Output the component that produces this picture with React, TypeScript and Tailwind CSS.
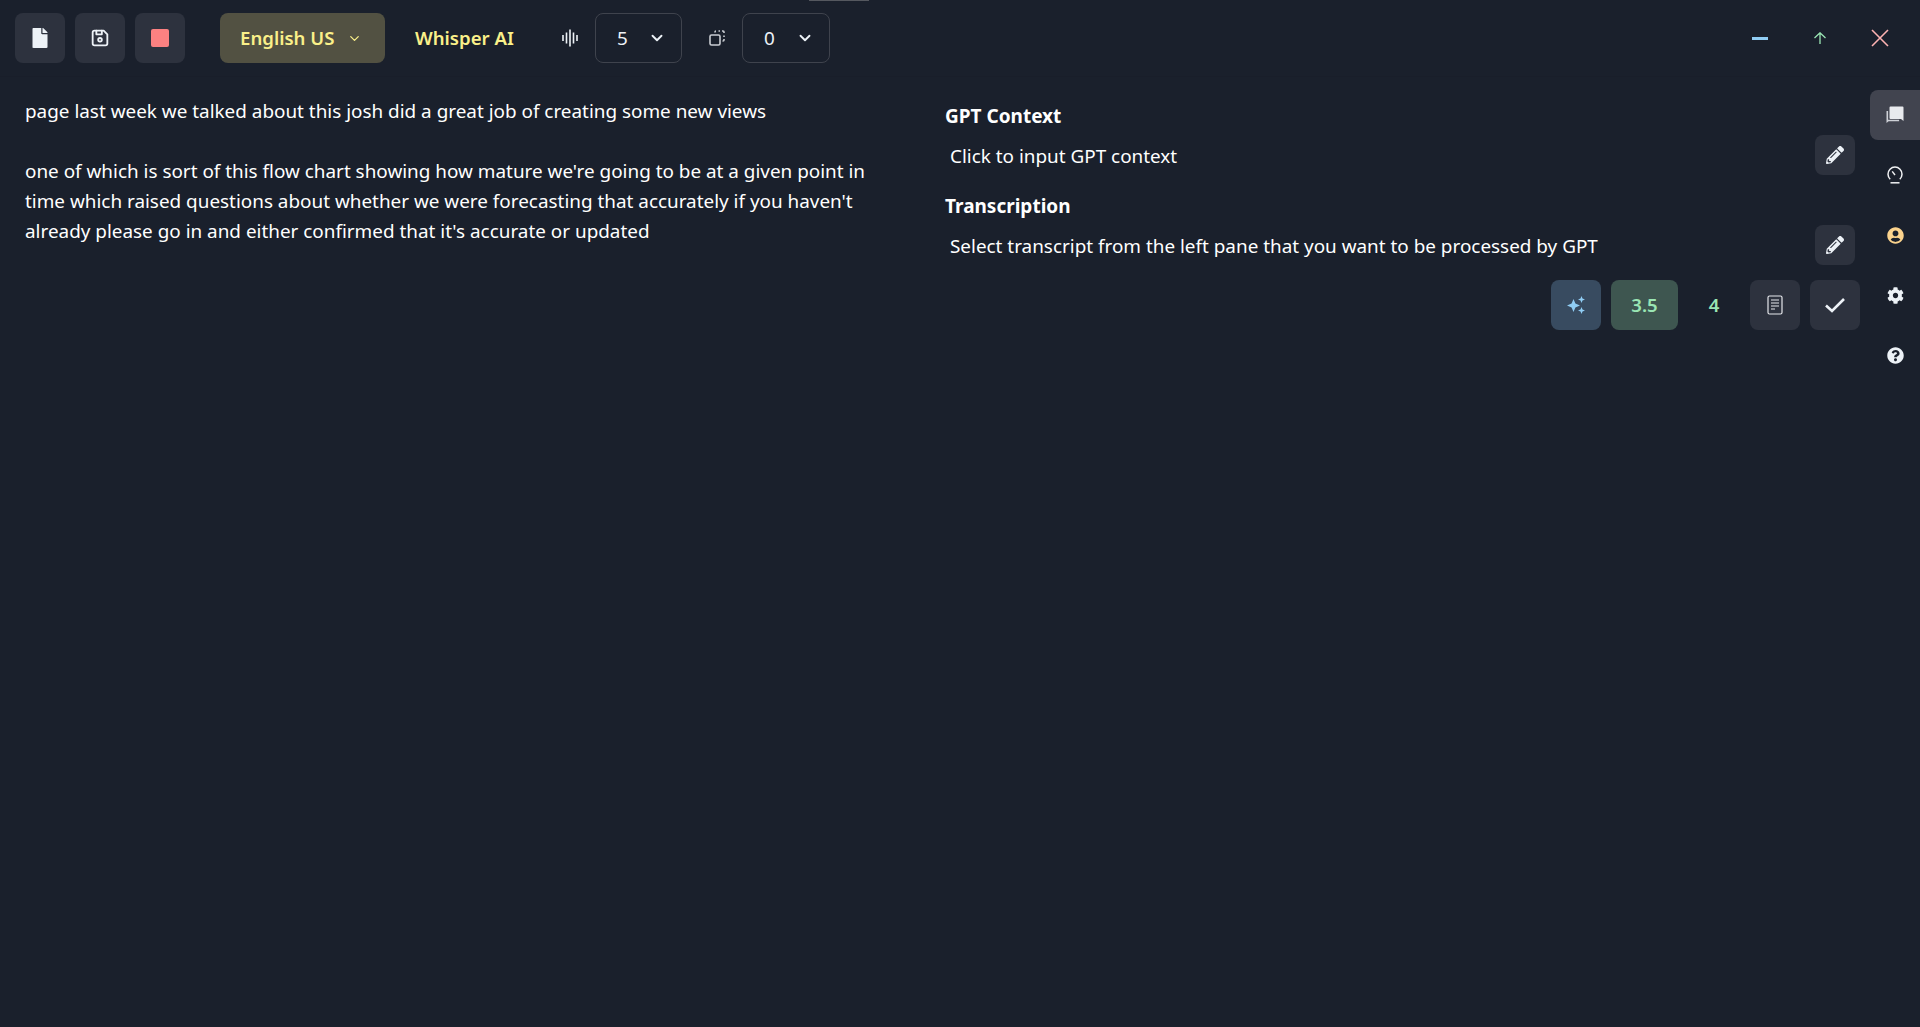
import { FaFile, FaPencilAlt, FaUserCircle, FaCog, FaQuestionCircle } from "react-icons/fa";
import { TbDeviceFloppy } from "react-icons/tb";
import { FiChevronDown } from "react-icons/fi";

function WaveIcon() {
  return (
    <svg width="16" height="18" viewBox="0 0 16 18" stroke="#edf2f7" fill="none" strokeWidth="1.6">
      <path d="M1 6v6M4.5 3.5v11M8 .5v17M11.5 3.5v11M15 6v6" />
    </svg>
  );
}

function StackIcon() {
  return (
    <svg width="16" height="16" viewBox="0 0 16 16" fill="none" stroke="#c9ccd2" strokeWidth="1.6">
      <rect x="1" y="5" width="10" height="10" rx="1.5" />
      <path d="M6 2.5V2a1 1 0 0 1 1-1M9.5 1h1.5M13 1h1a1 1 0 0 1 1 1v1M15 5.5V7M15 9v1a1 1 0 0 1-1 1h-.5" />
    </svg>
  );
}

function ChatIcon() {
  return (
    <svg width="18" height="18" viewBox="0 0 18 18" fill="#e8eaee">
      <path d="M3.5 1.5a1 1 0 0 1 1-1h12a1 1 0 0 1 1 1V15l-2.5-2H4.5a1 1 0 0 1-1-1z" />
      <path d="M.5 5h1.6v8.8h11V15.2H2.6L.5 17z" opacity="0.85" />
    </svg>
  );
}

function GaugeIcon() {
  return (
    <svg width="18" height="18" viewBox="0 0 18 18" fill="none" stroke="#f1f2f4" strokeWidth="1.5">
      <path d="M4.2 13.2a7 7 0 1 1 9.6 0" />
      <path d="M4.5 16.8h9" />
      <path d="M9 9 6.2 5.4" />
    </svg>
  );
}

function SparkIcon() {
  return (
    <svg width="18" height="18" viewBox="0 0 18 18" fill="#90cdf4">
      <path d="M6.5 3 8.4 7.6 13 9.5 8.4 11.4 6.5 16 4.6 11.4 0 9.5 4.6 7.6z" />
      <path d="M14.5 0 15.5 2.5 18 3.5 15.5 4.5 14.5 7 13.5 4.5 11 3.5 13.5 2.5z" />
      <path d="M14.5 11 15.5 13.5 18 14.5 15.5 15.5 14.5 18 13.5 15.5 11 14.5 13.5 13.5z" />
    </svg>
  );
}

function DocIcon() {
  return (
    <svg width="16" height="20" viewBox="0 0 16 20" fill="none" stroke="#e5e7eb" strokeWidth="1.2">
      <rect x="1" y="1" width="14" height="18" rx="1.5" />
      <path d="M4 5h8M4 8h8M4 11h8M4 14h4" />
    </svg>
  );
}

export default function App() {
  return (
    <div className="relative h-screen w-full bg-[#1a202c] text-white font-['Noto_Sans',sans-serif] text-[18.9px] leading-[30px] overflow-hidden flex flex-col">
      <div className="absolute left-[809px] top-0 h-px w-[60px] bg-[#55585f]" />
      {/* toolbar */}
      <header className="flex h-[76px] shrink-0 items-center pl-[15px] pr-[31px] shadow-[0_1px_0_#191e2a]">
        <div className="flex gap-[10px]">
          <button className="flex h-[50px] w-[50px] items-center justify-center rounded-lg bg-[#2d323e] text-[#edf2f7]">
            <FaFile size={20} />
          </button>
          <button className="flex h-[50px] w-[50px] items-center justify-center rounded-lg bg-[#2d323e] text-[#edf2f7]">
            <TbDeviceFloppy size={22} />
          </button>
          <button className="flex h-[50px] w-[50px] items-center justify-center rounded-lg bg-[#2d323e]">
            <span className="h-[18px] w-[18px] rounded-[2px] bg-[#fc8181]" />
          </button>
        </div>
        <button className="ml-[35px] flex h-[50px] w-[165px] items-center justify-between rounded-lg bg-[#525142] pl-[20px] pr-[23px] text-[18.6px] font-semibold text-[#faf089]">
          English US
          <FiChevronDown size={15} />
        </button>
        <span className="ml-[30px] w-[99px] whitespace-nowrap text-[18.6px] font-semibold text-[#faf089]">Whisper AI</span>
        <span className="ml-[48px] flex"><WaveIcon /></span>
        <button className="ml-[17px] flex h-[50px] w-[87px] items-center justify-between rounded-lg border border-[#3f434d] pl-[21px] pr-[15px] text-[#edf2f7]">
          5
          <FiChevronDown size={18} strokeWidth={2.5} />
        </button>
        <span className="ml-[27px] flex"><StackIcon /></span>
        <button className="ml-[17px] flex h-[50px] w-[88px] items-center justify-between rounded-lg border border-[#3f434d] pl-[21px] pr-[15px] text-[#edf2f7]">
          0
          <FiChevronDown size={18} strokeWidth={2.5} />
        </button>
        <div className="ml-auto flex items-center">
          <span className="block h-[3px] w-4 bg-[#90cdf4]" />
          <svg className="ml-[46px]" width="12" height="12" viewBox="0 0 12 12" fill="none" stroke="#9ae6b4" strokeWidth="1.3">
            <path d="M6 12V1M.5 6 6 .8 11.5 6" />
          </svg>
          <svg className="ml-[45px]" width="18" height="18" viewBox="0 0 18 18" fill="none" stroke="#feb2b2" strokeWidth="1.6">
            <path d="M1 1l16 16M17 1 1 17" />
          </svg>
        </div>
      </header>

      <div className="flex flex-1">
        {/* transcript */}
        <div className="w-[925px] shrink-0 pl-[25px] pr-[35px] pt-5">
          <p>page last week we talked about this josh did a great job of creating some new views</p>
          <p className="mt-[30px]">
            one of which is sort of this flow chart showing how mature we're going to be at a given point in time which raised questions about whether we were forecasting that accurately if you haven't already please go in and either confirmed that it's accurate or updated
          </p>
        </div>

        {/* gpt pane */}
        <div className="flex-1 pl-5 pr-[10px] pt-[25px]">
          <h2 className="text-[19px] font-bold">GPT Context</h2>
          <div className="mt-[4px] flex h-10 items-center justify-between pl-[5px] pr-[5px]">
            <span className="mt-[2px]">Click to input GPT context</span>
            <button className="flex h-10 w-10 items-center justify-center rounded-lg bg-[#2d323e] text-[#edf2f7]">
              <FaPencilAlt size={18} />
            </button>
          </div>
          <h2 className="mt-[16px] text-[19px] font-bold">Transcription</h2>
          <div className="mt-[4px] flex h-10 items-center justify-between pl-[5px] pr-[5px]">
            <span className="mt-[2px]">Select transcript from the left pane that you want to be processed by GPT</span>
            <button className="flex h-10 w-10 items-center justify-center rounded-lg bg-[#2d323e] text-[#edf2f7]">
              <FaPencilAlt size={18} />
            </button>
          </div>
          <div className="mt-[15px] flex justify-end gap-[10px]">
            <button className="flex h-[50px] w-[50px] items-center justify-center rounded-lg bg-[#384b60]">
              <SparkIcon />
            </button>
            <button className="flex h-[50px] w-[67px] items-center justify-center rounded-lg bg-[#3e5650] text-[18.6px] font-semibold text-[#9ae6b4]">
              3.5
            </button>
            <button className="flex h-[50px] w-[52px] items-center justify-center text-[18.6px] font-semibold text-[#9ae6b4]">
              4
            </button>
            <button className="flex h-[50px] w-[50px] items-center justify-center rounded-lg bg-[#2d323e]">
              <DocIcon />
            </button>
            <button className="flex h-[50px] w-[50px] items-center justify-center rounded-lg bg-[#2d323e]">
              <svg width="20" height="16" viewBox="0 0 20 16" fill="none" stroke="#edf2f7" strokeWidth="2.6">
                <path d="M1 8.5 7 14 19 2" />
              </svg>
            </button>
          </div>
        </div>

        {/* side tabs */}
        <nav className="flex w-[50px] shrink-0 flex-col gap-[10px] pt-[14px]">
          <button className="flex h-[50px] w-[50px] items-center justify-center rounded-l-lg bg-[#41444f]">
            <ChatIcon />
          </button>
          <button className="flex h-[50px] w-[50px] items-center justify-center">
            <GaugeIcon />
          </button>
          <button className="flex h-[50px] w-[50px] items-center justify-center text-[#fbd38d]">
            <FaUserCircle size={17} />
          </button>
          <button className="flex h-[50px] w-[50px] items-center justify-center text-[#edf2f7]">
            <FaCog size={17} />
          </button>
          <button className="flex h-[50px] w-[50px] items-center justify-center text-[#edf2f7]">
            <FaQuestionCircle size={17} />
          </button>
        </nav>
      </div>
    </div>
  );
}
